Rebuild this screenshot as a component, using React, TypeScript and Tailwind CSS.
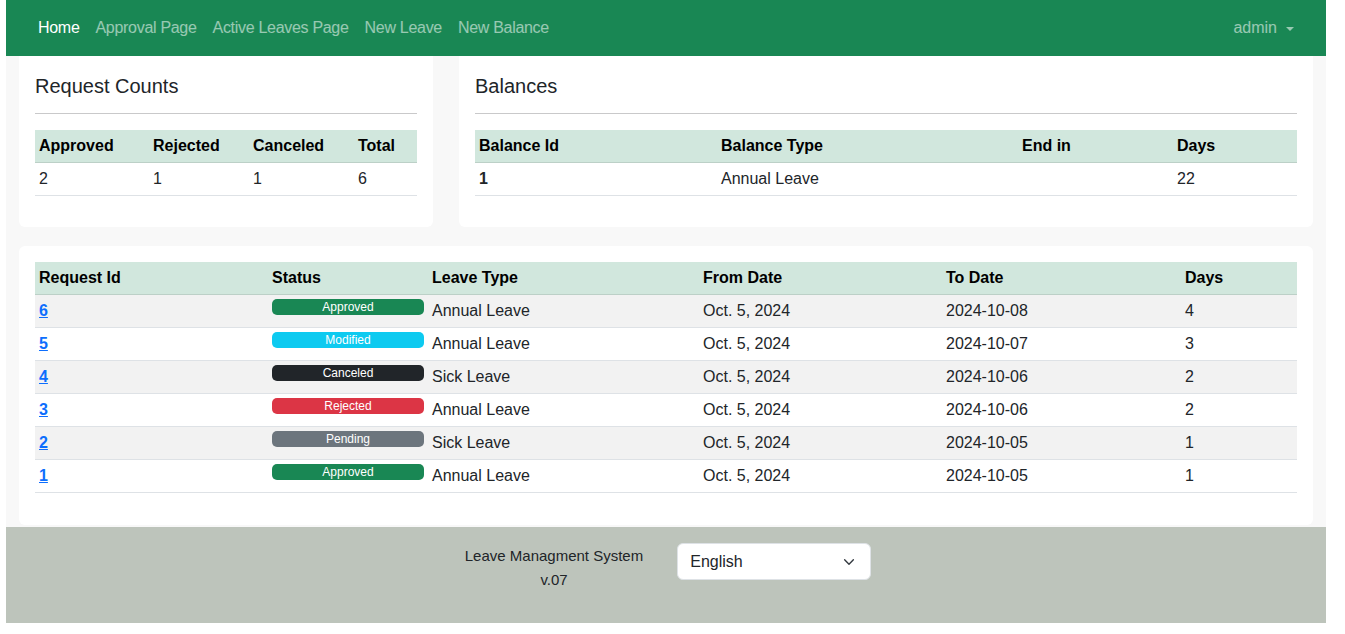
import React from "react";

const requests = [
  { id: 6, status: "Approved", type: "Annual Leave", from: "Oct. 5, 2024", to: "2024-10-08", days: 4 },
  { id: 5, status: "Modified", type: "Annual Leave", from: "Oct. 5, 2024", to: "2024-10-07", days: 3 },
  { id: 4, status: "Canceled", type: "Sick Leave", from: "Oct. 5, 2024", to: "2024-10-06", days: 2 },
  { id: 3, status: "Rejected", type: "Annual Leave", from: "Oct. 5, 2024", to: "2024-10-06", days: 2 },
  { id: 2, status: "Pending", type: "Sick Leave", from: "Oct. 5, 2024", to: "2024-10-05", days: 1 },
  { id: 1, status: "Approved", type: "Annual Leave", from: "Oct. 5, 2024", to: "2024-10-05", days: 1 },
];

const badgeColor: Record<string, string> = {
  Approved: "bg-[#198754]",
  Modified: "bg-[#0dcaf0]",
  Canceled: "bg-[#212529]",
  Rejected: "bg-[#dc3545]",
  Pending: "bg-[#6c757d]",
};

function Th({ children, className = "" }: { children: React.ReactNode; className?: string }) {
  return (
    <th className={`px-1 py-1 text-left font-bold text-black leading-6 border-b border-[#bcd0c7] ${className}`}>
      {children}
    </th>
  );
}

function Td({ children, className = "" }: { children: React.ReactNode; className?: string }) {
  return <td className={`px-1 py-1 align-top leading-6 ${className}`}>{children}</td>;
}

export default function App() {
  return (
    <div className="font-['Liberation_Sans',Arial,sans-serif] text-[#212529] text-base bg-white min-h-screen">
      <div className="ml-[6px] w-[1320px]">
        {/* Navbar */}
        <nav className="h-14 bg-[#198754] flex items-center justify-between pl-6 pr-8">
          <ul className="flex items-center tracking-[-0.3px]">
            <li className="px-2 text-white">Home</li>
            <li className="px-2 text-white/55">Approval Page</li>
            <li className="px-2 text-white/55">Active Leaves Page</li>
            <li className="px-2 text-white/55">New Leave</li>
            <li className="px-2 text-white/55">New Balance</li>
          </ul>
          <div className="flex items-center gap-[9px] text-white/55">
            <span>admin</span>
            <span className="w-0 h-0 border-l-[4px] border-r-[4px] border-t-[4px] border-l-transparent border-r-transparent border-t-[#98c9b2] mt-[2px]" />
          </div>
        </nav>

        {/* Content */}
        <div className="bg-[#f8f8f8] px-[13px] pb-[2px]">
          <div className="flex gap-[26px]">
            <div className="w-[414px] bg-white rounded-b-md px-4 pt-4 pb-[31px]">
              <h5 className="text-xl leading-7">Request Counts</h5>
              <hr className="mt-[13px] mb-4 border-t border-[#c9c9ca]" />
              <table className="w-full border-collapse">
                <thead className="bg-[#d1e7dd]">
                  <tr>
                    <Th className="w-[114px]">Approved</Th>
                    <Th className="w-[100px]">Rejected</Th>
                    <Th className="w-[105px]">Canceled</Th>
                    <Th>Total</Th>
                  </tr>
                </thead>
                <tbody>
                  <tr className="border-b border-[#dee2e6]">
                    <Td>2</Td>
                    <Td>1</Td>
                    <Td>1</Td>
                    <Td>6</Td>
                  </tr>
                </tbody>
              </table>
            </div>

            <div className="flex-1 bg-white rounded-b-md px-4 pt-4 pb-[31px]">
              <h5 className="text-xl leading-7">Balances</h5>
              <hr className="mt-[13px] mb-4 border-t border-[#c9c9ca]" />
              <table className="w-full border-collapse">
                <thead className="bg-[#d1e7dd]">
                  <tr>
                    <Th className="w-[242px]">Balance Id</Th>
                    <Th className="w-[301px]">Balance Type</Th>
                    <Th className="w-[155px]">End in</Th>
                    <Th>Days</Th>
                  </tr>
                </thead>
                <tbody>
                  <tr className="border-b border-[#dee2e6]">
                    <Td className="font-bold">1</Td>
                    <Td>Annual Leave</Td>
                    <Td>{""}</Td>
                    <Td>22</Td>
                  </tr>
                </tbody>
              </table>
            </div>
          </div>

          <div className="mt-[19px] bg-white rounded-md px-4 pt-4 pb-8">
            <table className="w-full border-collapse">
              <thead className="bg-[#d1e7dd]">
                <tr>
                  <Th className="w-[233px]">Request Id</Th>
                  <Th className="w-[160px]">Status</Th>
                  <Th className="w-[271px]">Leave Type</Th>
                  <Th className="w-[243px]">From Date</Th>
                  <Th className="w-[239px]">To Date</Th>
                  <Th>Days</Th>
                </tr>
              </thead>
              <tbody>
                {requests.map((r, i) => (
                  <tr
                    key={r.id}
                    className={`border-b border-[#dee2e6] ${i % 2 === 0 ? "bg-[#f2f2f2]" : "bg-white"}`}
                  >
                    <Td>
                      <a className="font-bold text-[#0d6efd] underline">{r.id}</a>
                    </Td>
                    <Td>
                      <span
                        className={`block w-full rounded-[5px] text-center text-white text-xs leading-4 font-medium ${badgeColor[r.status]}`}
                      >
                        {r.status}
                      </span>
                    </Td>
                    <Td>{r.type}</Td>
                    <Td>{r.from}</Td>
                    <Td>{r.to}</Td>
                    <Td>{r.days}</Td>
                  </tr>
                ))}
              </tbody>
            </table>
          </div>
        </div>

        {/* Footer */}
        <footer className="h-[96px] bg-[#bdc4bb] flex justify-center items-start pt-4 pl-[4px]">
          <div className="text-center text-[15px] leading-6 mt-[1px]">
            <div>Leave Managment System</div>
            <div>v.07</div>
          </div>
          <div className="ml-[34px] w-[194px] h-[37px] bg-white rounded-md border border-[#dee2e6] flex items-center justify-between pl-3 pr-[14px]">
            <span>English</span>
            <svg width="14" height="14" viewBox="0 0 16 16" fill="none">
              <path d="m3 5.5 5 5 5-5" stroke="#343a40" strokeWidth="1.6" strokeLinecap="round" strokeLinejoin="round" />
            </svg>
          </div>
        </footer>
      </div>
    </div>
  );
}
